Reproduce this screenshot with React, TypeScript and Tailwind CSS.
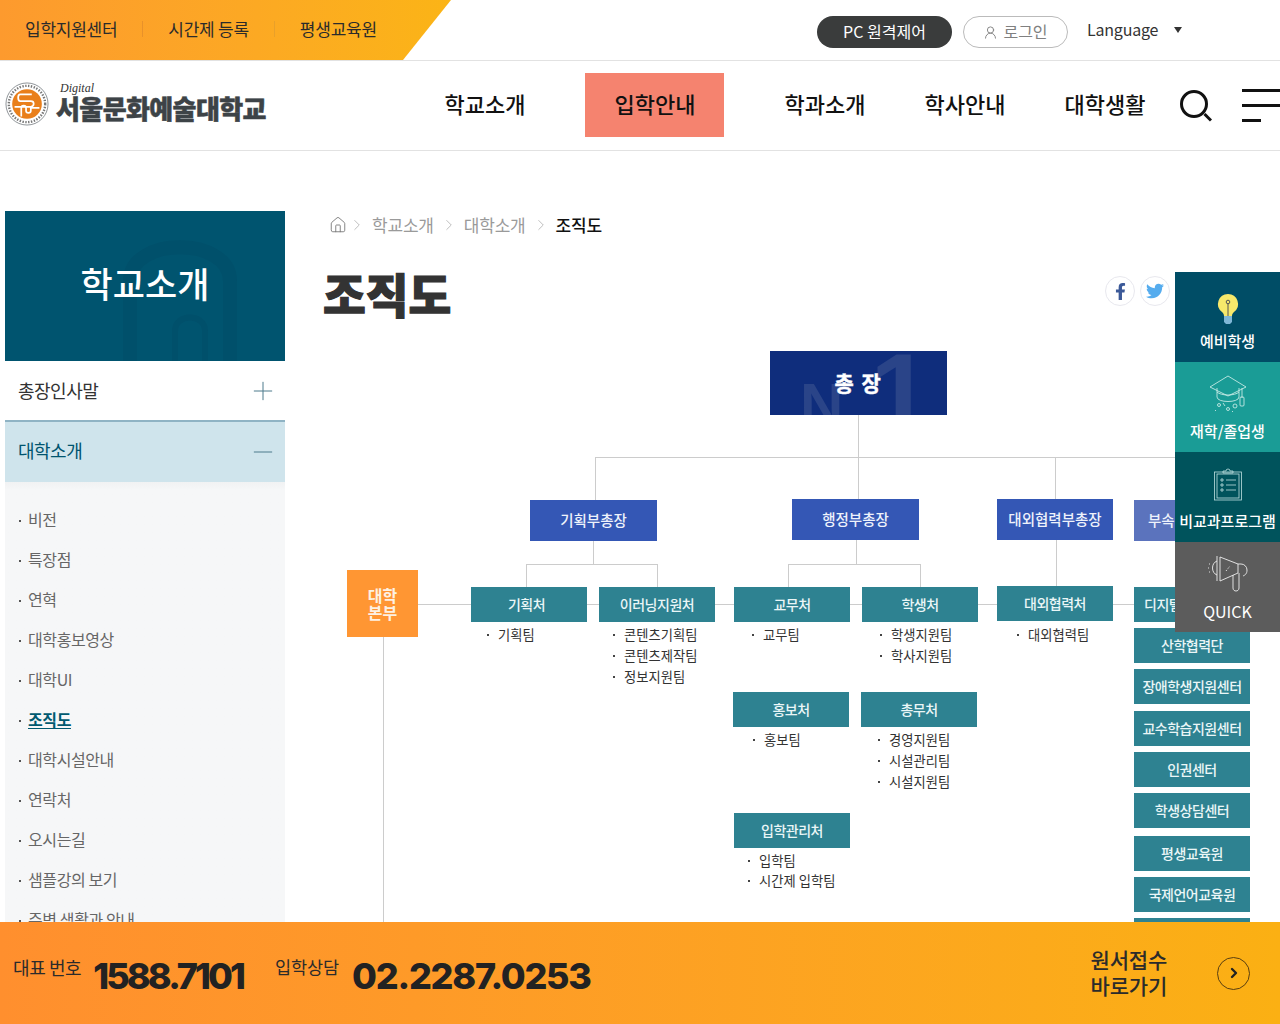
import { Home, ChevronRight, Plus, Minus, UserRound, ChevronRight as Go } from "lucide-react";
import { FaFacebookF, FaTwitter } from "react-icons/fa";

const navItems = ["학교소개", "입학안내", "학과소개", "학사안내", "대학생활"];
const subMenu = ["비전", "특장점", "연혁", "대학홍보영상", "대학UI", "조직도", "대학시설안내", "연락처", "오시는길", "샘플강의 보기", "주변 생활과 안내"];

function Logo() {
  return (
    <div className="ml-[5px] flex w-[410px] shrink-0 items-center">
      <svg width="44" height="44" viewBox="0 0 46 46" className="mt-[-4px] shrink-0">
        <circle cx="23" cy="23" r="22" fill="#fff" stroke="#8a9094" strokeWidth="1" />
        <circle cx="23" cy="23" r="19" fill="none" stroke="#777" strokeWidth="2.5" strokeDasharray="1.5 1.5" />
        <circle cx="23" cy="23" r="15.5" fill="#e97f1b" />
        <path d="M28 13H16c-3 0-3 7 0 7h11c4 0 4 5 0 6H10" fill="none" stroke="#fff" strokeWidth="1.8" />
        <path d="M17 36V27c0-3 5-3 5 0v3c0 3 5 3 5 0v-3h9" fill="none" stroke="#fff" strokeWidth="1.8" />
      </svg>
      <div className="relative ml-[7px] mt-[-9px] pt-[14px]">
        <span className="absolute left-[4px] top-[3px] text-[12px] italic leading-none text-[#333] [font-family:'Liberation_Serif',serif]">Digital</span>
        <span className="block whitespace-nowrap text-[26px] font-black leading-[30px] tracking-[-0.6px] text-[#3d4347] [-webkit-text-stroke:0.5px_#3d4347]">서울문화예술대학교</span>
      </div>
    </div>
  );
}

function Header() {
  return (
    <header className="shrink-0">
      <div className="flex h-[61px] items-center border-b border-[#e2e2e2]">
        <div className="flex h-[60px] w-[451px] shrink-0 items-center bg-gradient-to-r from-[#fd9a2e] to-[#fbb416] pb-[2px] pl-[25px] text-[17px] tracking-[-0.25px] text-[#2b2b2b] [clip-path:polygon(0_0,100%_0,403px_100%,0_100%)]">
          <span>입학지원센터</span>
          <span className="mx-[25px] h-[16px] w-px bg-[#e8912a]" />
          <span>시간제 등록</span>
          <span className="mx-[25px] h-[16px] w-px bg-[#e8a02a]" />
          <span>평생교육원</span>
        </div>
        <div className="ml-[366px] flex items-center">
          <span className="mt-[4px] flex h-[32px] w-[135px] items-center justify-center rounded-full bg-[#3a3c3c] pb-[3px] text-[16px] text-white">PC 원격제어</span>
          <span className="ml-[11px] mt-[4px] flex h-[32px] w-[105px] items-center justify-center gap-[5px] rounded-full border border-[#bbbbbb] pb-[3px] text-[16px] text-[#808080]">
            <UserRound size={15} strokeWidth={1.5} className="mt-[3px]" />
            로그인
          </span>
          <span className="ml-[19px] mt-[-3px] text-[16px] tracking-[-0.2px] text-[#333]">Language</span>
          <span className="ml-[16px] h-0 w-0 border-x-[4px] border-t-[6px] border-x-transparent border-t-[#333]" />
        </div>
      </div>
      <div className="flex h-[90px] items-center border-b border-[#e2e2e2]">
        <Logo />
        {navItems.map((it, i) => (
          <a
            key={it}
            className={
              i === 1
                ? "ml-[30px] mr-[31px] flex h-[64px] w-[139px] -translate-y-[1px] items-center justify-center bg-[#f5836f] pb-[2px] pl-[1px] text-[22px] font-medium text-[#111]"
                : "flex h-[64px] w-[140px] -translate-y-[1px] items-center justify-center pb-[2px] text-[22px] font-medium text-[#111]"
            }
          >
            {it}
          </a>
        ))}
        <svg width="32" height="32" viewBox="0 0 32 32" fill="none" stroke="#111" className="ml-[5px] shrink-0">
          <circle cx="14" cy="14" r="12.5" strokeWidth="3" />
          <path d="M24.500 24l6.500 6.500" strokeWidth="3" />
        </svg>
        <div className="ml-[30px] flex w-[38px] flex-col gap-[12px]">
          <span className="h-[3px] w-[38px] bg-[#111]" />
          <span className="h-[3px] w-[38px] bg-[#111]" />
          <span className="h-[3px] w-[19px] bg-[#111]" />
        </div>
      </div>
    </header>
  );
}

function Sidebar() {
  return (
    <aside className="w-[280px] shrink-0">
      <div className="relative flex h-[150px] items-center justify-center overflow-hidden bg-[#00546f] pb-[6px]">
        <svg className="absolute inset-0" width="280" height="150" viewBox="0 0 280 150" fill="none">
          <path d="M125 150V70c0-45 100-45 100 0v80" stroke="#00506b" strokeWidth="14" />
          <path d="M170 150v-30c0-18 30-18 30 0v30" stroke="#00506b" strokeWidth="6" />
        </svg>
        <span className="relative text-[35px] font-medium text-white">학교소개</span>
      </div>
      <div className="flex h-[61px] items-center justify-between border-b-2 border-[#8fb3c4] pl-[13px] pr-[7px] text-[18px] tracking-[-0.5px] text-[#333]">
        총장인사말
        <Plus size={30} strokeWidth={0.8} className="text-[#4d7a8c]" />
      </div>
      <div className="flex h-[60px] items-center justify-between bg-[#cfe4ec] pb-[3px] pl-[13px] pr-[7px] text-[18px] tracking-[-0.5px] text-[#00546f]">
        대학소개
        <Minus size={30} strokeWidth={0.8} className="mt-[2px] text-[#4d7a8c]" />
      </div>
      <ul className="bg-gradient-to-b from-[#f1f2f3] to-[#f6f7f8] to-[8px] pb-[20px] pt-[17px]">
        {subMenu.map((it) => (
          <li key={it} className="flex h-[40px] items-center pl-[14px] text-[16px] tracking-[-0.4px] text-[#666]">
            <span className="mr-[7px] mt-[3px] h-[2px] w-[2px] bg-[#555]" />
            {it === "조직도" ? <span className="font-bold text-[#005a70] underline underline-offset-2">{it}</span> : it}
          </li>
        ))}
      </ul>
    </aside>
  );
}

function Box({ pos, label, tone = "teal" }: { pos: string; label: string; tone?: "teal" | "blue" | "pale" }) {
  const bg =
    tone === "blue"
      ? "bg-[#3457b5] text-[14.5px] text-[#eef2fb]"
      : tone === "pale"
        ? "bg-[#5b73bd] text-[14.5px] text-[#eef2fb]"
        : "bg-[#2e8291] text-[14px] tracking-[-0.5px] text-[#eaf6f7]";
  return <div className={`absolute flex items-center justify-center overflow-hidden whitespace-nowrap pb-[1px] font-medium ${bg} ${pos}`}>{label}</div>;
}

function Teams({ pos, items, tight }: { pos: string; items: string[]; tight?: boolean }) {
  return (
    <ul className={`absolute ${pos}`}>
      {items.map((it) => (
        <li key={it} className={`flex items-center gap-[9px] whitespace-nowrap text-[13.3px] text-[#333] ${tight ? "h-[20px]" : "h-[21px]"}`}>
          <span className="h-[2px] w-[2px] bg-[#444]" />
          {it}
        </li>
      ))}
    </ul>
  );
}

function OrgChart() {
  const line = "absolute bg-[#cccccc]";
  return (
    <div className="relative ml-[35px] mt-[16px] h-[700px] w-[960px]">
      {/* 연결선 */}
      <div className={`${line} left-[538px] top-[75px] h-[42px] w-px`} />
      <div className={`${line} left-[275px] top-[117px] h-px w-[600px]`} />
      <div className={`${line} left-[275px] top-[117px] h-[43px] w-px`} />
      <div className={`${line} left-[538px] top-[117px] h-[42px] w-px`} />
      <div className={`${line} left-[735px] top-[117px] h-[42px] w-px`} />
      <div className={`${line} left-[273px] top-[201px] h-[23px] w-px`} />
      <div className={`${line} left-[206px] top-[224px] h-px w-[131px]`} />
      <div className={`${line} left-[206px] top-[224px] h-[23px] w-px`} />
      <div className={`${line} left-[337px] top-[224px] h-[23px] w-px`} />
      <div className={`${line} left-[536px] top-[200px] h-[24px] w-px`} />
      <div className={`${line} left-[468px] top-[224px] h-px w-[132px]`} />
      <div className={`${line} left-[468px] top-[224px] h-[23px] w-px`} />
      <div className={`${line} left-[600px] top-[224px] h-[23px] w-px`} />
      <div className={`${line} left-[736px] top-[200px] h-[46px] w-px`} />
      <div className={`${line} left-[98px] top-[264px] h-px w-[716px]`} />
      <div className={`${line} left-[63px] top-[297px] h-[400px] w-px`} />

      {/* 총장 */}
      <div className="absolute left-[450px] top-[11px] flex h-[64px] w-[177px] items-center justify-center overflow-hidden bg-[#0f2d7c]">
        <span className="absolute left-[30px] top-[24px] text-[60px] font-bold leading-none text-[#2a4488] [font-family:'Liberation_Sans',sans-serif]">N</span>
        <span className="absolute left-[100px] top-[-14px] text-[110px] font-bold leading-none text-[#2a4488] [font-family:'Liberation_Sans',sans-serif]">1</span>
        <span className="relative text-[21px] font-bold tracking-[1.5px] text-white [-webkit-text-stroke:0.4px_#fff]">총 장</span>
      </div>

      <Box tone="blue" pos="left-[210px] top-[160px] w-[127px] h-[41px]" label="기획부총장" />
      <Box tone="blue" pos="left-[472px] top-[159px] w-[127px] h-[41px]" label="행정부총장" />
      <Box tone="blue" pos="left-[677px] top-[159px] w-[116px] h-[41px]" label="대외협력부총장" />
      <Box tone="pale" pos="left-[814px] top-[160px] w-[116px] h-[41px] justify-start pl-[14px]" label="부속기관" />

      <div className="absolute left-[27px] top-[230px] flex h-[67px] w-[71px] items-center justify-center bg-[#ff9633] text-center text-[16px] font-bold leading-[17px] text-[#fdf1e2]">
        대학
        <br />
        본부
      </div>

      <Box pos="left-[151px] top-[247px] w-[116px] h-[35px] pr-[5px]" label="기획처" />
      <Box pos="left-[279px] top-[247px] w-[116px] h-[35px]" label="이러닝지원처" />
      <Box pos="left-[414px] top-[247px] w-[116px] h-[35px]" label="교무처" />
      <Box pos="left-[542px] top-[247px] w-[116px] h-[35px]" label="학생처" />
      <Box pos="left-[677px] top-[246px] w-[116px] h-[35px]" label="대외협력처" />
      <Box pos="left-[814px] top-[247px] w-[116px] h-[35px] justify-start pl-[10px]" label="디지털교육센터" />
      <Box pos="left-[814px] top-[288px] w-[116px] h-[35px]" label="산학협력단" />
      <Box pos="left-[814px] top-[329px] w-[116px] h-[35px]" label="장애학생지원센터" />
      <Box pos="left-[814px] top-[371px] w-[116px] h-[35px]" label="교수학습지원센터" />
      <Box pos="left-[814px] top-[412px] w-[116px] h-[35px]" label="인권센터" />
      <Box pos="left-[814px] top-[453px] w-[116px] h-[35px]" label="학생상담센터" />
      <Box pos="left-[814px] top-[496px] w-[116px] h-[35px]" label="평생교육원" />
      <Box pos="left-[814px] top-[537px] w-[116px] h-[35px]" label="국제언어교육원" />
      <Box pos="left-[814px] top-[578px] w-[116px] h-[35px]" label="" />
      <Box pos="left-[413px] top-[352px] w-[116px] h-[35px]" label="홍보처" />
      <Box pos="left-[541px] top-[352px] w-[116px] h-[35px]" label="총무처" />
      <Box pos="left-[414px] top-[473px] w-[116px] h-[35px]" label="입학관리처" />

      <Teams pos="left-[167px] top-[284px]" items={["기획팀"]} />
      <Teams pos="left-[293px] top-[284px]" items={["콘텐츠기획팀", "콘텐츠제작팀", "정보지원팀"]} />
      <Teams pos="left-[432px] top-[284px]" items={["교무팀"]} />
      <Teams pos="left-[560px] top-[284px]" items={["학생지원팀", "학사지원팀"]} />
      <Teams pos="left-[697px] top-[284px]" items={["대외협력팀"]} />
      <Teams pos="left-[433px] top-[389px]" items={["홍보팀"]} />
      <Teams pos="left-[558px] top-[389px]" items={["경영지원팀", "시설관리팀", "시설지원팀"]} />
      <Teams pos="left-[428px] top-[511px]" items={["입학팀", "시간제 입학팀"]} tight />
    </div>
  );
}

function Content() {
  return (
    <main className="relative min-w-0 flex-1">
      <div className="ml-[44px] flex h-[28px] items-center text-[17px] tracking-[-0.2px] text-[#9a9a9a]">
        <Home size={18} strokeWidth={1.2} className="text-[#777]" />
        <ChevronRight size={18} strokeWidth={1} className="ml-[1px] mr-[6px] text-[#aaa]" />
        <span>학교소개</span>
        <ChevronRight size={18} strokeWidth={1} className="mx-[6px] text-[#aaa]" />
        <span>대학소개</span>
        <ChevronRight size={18} strokeWidth={1} className="mx-[6px] text-[#aaa]" />
        <span className="font-medium text-[#111]">조직도</span>
      </div>
      <div className="relative">
        <h1 className="ml-[38px] mt-[23px] h-[62px] text-[46.500px] font-black leading-[62px] text-[#333] [-webkit-text-stroke:1.2px_#333]">조직도</h1>
        <div className="absolute left-[820px] top-[14px] flex gap-[5px]">
          <span className="flex h-[30px] w-[30px] items-center justify-center rounded-full border border-[#e8e8ee]">
            <FaFacebookF size={17} className="text-[#3b5998]" />
          </span>
          <span className="flex h-[30px] w-[30px] items-center justify-center rounded-full border border-[#e8e8ee]">
            <FaTwitter size={18} className="text-[#55acee]" />
          </span>
        </div>
      </div>
      <OrgChart />
    </main>
  );
}

function QuickPanel() {
  const label = "whitespace-nowrap text-[15px] font-medium leading-[20px] text-white";
  return (
    <div className="fixed right-0 top-[272px] z-10 w-[105px]">
      <div className="flex h-[90px] flex-col items-center justify-end gap-[6px] bg-[#004d66] pb-[11px]">
        <svg width="24" height="32" viewBox="0 0 24 32" fill="none">
          <path d="M12 1a10 10 0 0 0-6 18c1.500 1.200 2 2.500 2 4h8c0-1.500.5-2.800 2-4A10 10 0 0 0 12 1Z" fill="#f7e86b" />
          <path d="M12 10v13" stroke="#555" strokeWidth="1" />
          <circle cx="12" cy="9" r="1.800" fill="none" stroke="#555" />
          <path d="M8 23h8v6l-2 2h-4l-2-2Z" fill="#7fb6d6" />
        </svg>
        <span className={label}>예비학생</span>
      </div>
      <div className="flex h-[90px] flex-col items-center justify-end gap-[8px] bg-[#1a9c96] pb-[11px]">
        <svg width="40" height="38" viewBox="0 0 40 38" fill="none" stroke="#d8f2ee" strokeWidth="0.8">
          <path d="M20 1 2 12l18 9 18-9Z" />
          <path d="M9 13v9c0 6 22 6 22 0v-9" />
          <path d="M9 17c4 4 18 4 22 0" />
          <path d="M34 13v10" />
          <rect x="32" y="22" width="4" height="9" rx="1" />
          <circle cx="11" cy="30" r="1.500" />
          <circle cx="20" cy="34" r="1.500" />
          <circle cx="27" cy="31" r="2" />
          <path d="M15 28l2 3M7 35l1 1M24 36l1 1" />
        </svg>
        <span className={label}>재학/졸업생</span>
      </div>
      <div className="flex h-[90px] flex-col items-center justify-end gap-[10px] bg-[#00535c] pb-[11px]">
        <svg width="30" height="34" viewBox="0 0 30 34" fill="none" stroke="#bfe0e0" strokeWidth="0.8">
          <rect x="1.500" y="5" width="27" height="28" />
          <rect x="4" y="7" width="22" height="24" />
          <path d="M10 6V4h3a2 2 0 0 1 4 0h3v2Z" />
          <path d="M8 12h2v2H8ZM8 17h2v2H8ZM8 22h2v2H8ZM13 13h10M13 18h10M13 23h10" />
        </svg>
        <span className={label}>비교과프로그램</span>
      </div>
      <div className="flex h-[90px] flex-col items-center justify-end gap-[8px] bg-[#5c5c5c] pb-[11px]">
        <svg width="40" height="38" viewBox="0 0 40 38" fill="none" stroke="#eeeeee" strokeWidth="0.9">
          <path d="M9 1v25" />
          <path d="M12 2v24l18-8V9Z" />
          <path d="M9 6c-6 2-6 12 0 14" />
          <path d="M30 9h3a6 6 0 0 1 6 6c0 4-2 5-4 6" />
          <path d="M25 20v13c0 4 6 4 6 0V18" />
          <path d="M18 16l4-5" strokeDasharray="1.500 1.500" />
          <path d="M1 9h2M0 13h2M1 17h2" strokeDasharray="1 1" />
        </svg>
        <span className={`${label} text-[16px] font-normal`}>QUICK</span>
      </div>
    </div>
  );
}

function BottomBar() {
  const num = "text-[36px] font-extrabold leading-none text-[#222] [font-family:Inter,sans-serif]";
  return (
    <div className="fixed inset-x-0 bottom-0 z-20 flex h-[102px] items-center bg-gradient-to-r from-[#ff8f2e] to-[#fbb013] pl-[13px] text-[#2b2b2b]">
      <span className="mb-[11px] text-[18px] tracking-[-0.4px]">대표 번호</span>
      <span className={`mb-[-5px] ml-[12px] tracking-[-2.9px] ${num}`}>1588.7101</span>
      <span className="mb-[11px] ml-[32px] text-[17.500px] tracking-[-0.1px]">입학상담</span>
      <span className={`mb-[-5px] ml-[13px] tracking-[-1.25px] ${num}`}>02.2287.0253</span>
      <div className="ml-auto flex items-center pr-[30px]">
        <span className="mt-[-2px] text-[21px] font-medium leading-[26px] tracking-[-0.2px]">
          원서접수
          <br />
          바로가기
        </span>
        <span className="ml-[50px] flex h-[33px] w-[33px] items-center justify-center rounded-full border-[1.5px] border-[#5a3f10]">
          <Go size={16} strokeWidth={3.500} className="text-[#222]" />
        </span>
      </div>
    </div>
  );
}

export default function App() {
  return (
    <div className="flex h-screen flex-col overflow-hidden bg-white [font-family:'Noto_Sans_CJK_KR','Noto_Sans',sans-serif]">
      <Header />
      <div className="ml-[5px] mt-[60px] flex min-h-0 flex-1">
        <Sidebar />
        <Content />
      </div>
      <QuickPanel />
      <BottomBar />
    </div>
  );
}
